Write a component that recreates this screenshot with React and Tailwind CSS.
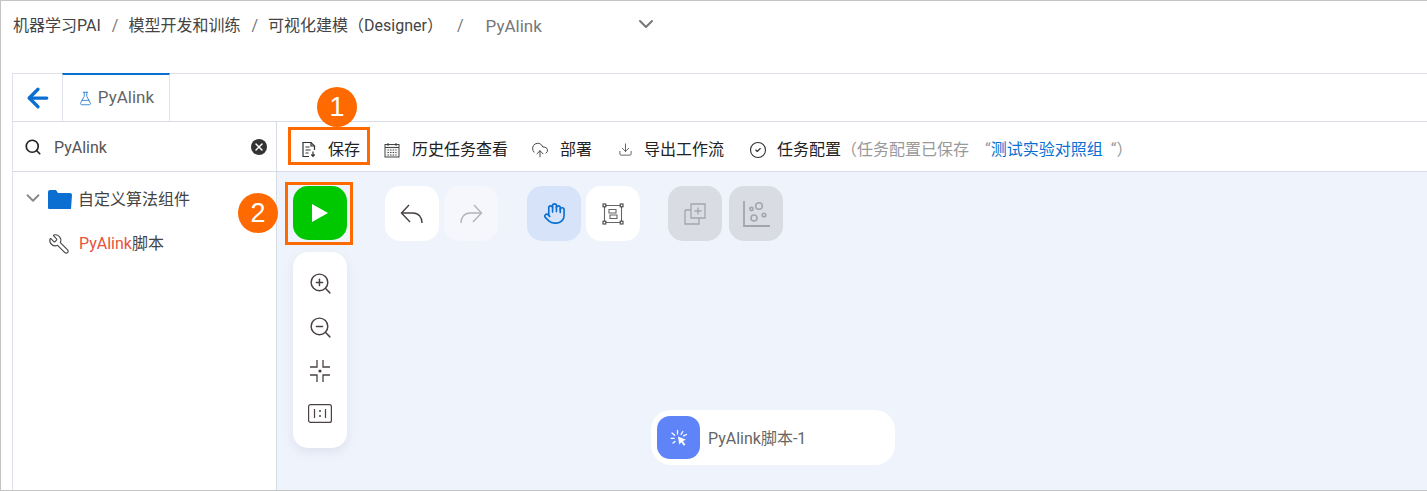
import { ChevronDown, ArrowLeft, FlaskConical, Search, CircleCheck, CloudUpload, Download, Hand, ZoomIn, ZoomOut, Wrench, X } from 'lucide-react';

const FONT = "font-['Roboto','Noto_Sans_CJK_SC',sans-serif]";

function SaveIcon() {
  return (
    <svg width="16" height="17" viewBox="0 0 16 17" fill="none" stroke="#333" strokeWidth="1.2">
      <path d="M8 15.5H2V1.5h8l3.5 3.5v4" />
      <path d="M10 1.5V5h3.5M4.5 6h4M4.5 9h5M4.5 12h3" />
      <path d="M12 10.5v4.5M10.3 13.5l1.7 1.8 1.7-1.8" />
    </svg>
  );
}

function CalendarIcon() {
  return (
    <svg width="16" height="16" viewBox="0 0 16 16" fill="none" stroke="#444" strokeWidth="1">
      <rect x="1" y="2.5" width="14" height="12.5" fill="#f5f5f5" />
      <path d="M1 5.5h14M4 1v3M12 1v3" />
      <path d="M3.5 8h9M3.5 10.5h9M3.5 13h9" strokeDasharray="1.4 1.2" />
    </svg>
  );
}

function ReplyIcon({ color, flip }) {
  return (
    <svg width="24" height="20" viewBox="0 0 24 20" fill="none" stroke={color} strokeWidth="1.4" className={flip ? '-scale-x-100' : ''}>
      <path d="M9 1L1.5 9l8.5 9" />
      <path d="M1.5 9H13c5.500 0 9 4 9 10" />
    </svg>
  );
}

function SelectIcon() {
  return (
    <svg width="22" height="22" viewBox="0 0 22 22" fill="none" stroke="#666" strokeWidth="1.1">
      <path d="M2.500 2.500h17v17h-17z" />
      <path d="M7 6.500h7v3.500H7zM8 12h7v3.500H8z" />
      <g fill="#fff" stroke="#444">
        <rect x="1" y="1" width="2.800" height="2.800" />
        <rect x="18.200" y="1" width="2.800" height="2.800" />
        <rect x="1" y="18.200" width="2.800" height="2.800" />
        <rect x="18.200" y="18.200" width="2.800" height="2.800" />
      </g>
    </svg>
  );
}

function GroupIcon() {
  return (
    <svg width="22" height="22" viewBox="0 0 22 22" fill="none" stroke="#a3a5aa" strokeWidth="1.3">
      <path d="M7 1h14v14H7z" />
      <path d="M1 7h6M1 7v14h14v-6" />
      <path d="M14 4.500v7M10.500 8h7" />
    </svg>
  );
}

function ScatterIcon() {
  return (
    <svg width="28" height="28" viewBox="0 0 28 28" fill="none" stroke="#a3a5aa" strokeWidth="1.6">
      <path d="M2 1v25h26" strokeWidth="1.8" />
      <circle cx="17" cy="6" r="3.300" />
      <circle cx="9.500" cy="9" r="1.600" />
      <circle cx="12" cy="18" r="3" />
      <circle cx="22" cy="15" r="1.800" />
    </svg>
  );
}

function FitIcon() {
  return (
    <svg width="24" height="24" viewBox="0 0 24 24" fill="none" stroke="#4a4042" strokeWidth="1.3">
      <path d="M9 1v7H2M15 1v7h7M9 23v-7H2M15 23v-7h7" />
      <circle cx="12" cy="12" r="1.600" fill="#4a4042" stroke="none" />
    </svg>
  );
}

function RatioIcon() {
  return (
    <svg width="24" height="19" viewBox="0 0 24 19" fill="none" stroke="#4a4042" strokeWidth="1.2">
      <rect x="0.600" y="0.600" width="22.800" height="17.800" rx="2" />
      <path d="M6.500 5v9M17.500 5v9" />
      <circle cx="12" cy="7" r="1" fill="#4a4042" stroke="none" />
      <circle cx="12" cy="12" r="1" fill="#4a4042" stroke="none" />
    </svg>
  );
}

function ClickIcon() {
  return (
    <svg width="18" height="18" viewBox="0 0 18 18" fill="#fff" stroke="#fff">
      <path d="M8 7.500l8 3.200-3.200 1.300 2.600 3.600-1.600 1.100-2.400-3.500-2.200 2.400z" stroke="none" />
      <path d="M7.500 1.500v3.500M2 4l2.700 2.300M1 9.300h3.200M3 14l2-1.600M12.800 2.500l-1.700 2.800M16.500 5.500l-3 1.400" strokeWidth="1.300" strokeLinecap="round" fill="none" />
    </svg>
  );
}

function FolderIcon() {
  return (
    <svg width="24" height="20" viewBox="0 0 24 20">
      <path d="M0 2a2 2 0 0 1 2-2h6l2 3h12a2 2 0 0 1 2 2l-1 14H1a1 1 0 0 1-1-1z" fill="#0a6fd0" />
    </svg>
  );
}

function Tool({ icon, label, className = '' }) {
  return (
    <div className={`flex items-center text-[16px] text-[#222] whitespace-nowrap ${className}`}>
      {icon}
      <span>{label}</span>
    </div>
  );
}

function CanvasBtn({ children, className = 'bg-white' }) {
  return <div className={`w-[54px] h-[55px] rounded-[15px] flex items-center justify-center ${className}`}>{children}</div>;
}

function Marker({ n, className }) {
  return (
    <div className={`absolute w-10 h-10 rounded-full bg-[#ff6a00] text-white text-[27px] flex items-center justify-center font-['Liberation_Sans',sans-serif] ${className}`}>{n}</div>
  );
}

export default function App() {
  return (
    <div className={`relative w-[1427px] h-[491px] overflow-hidden bg-white border-t border-l border-b border-[#c4c4c4] flex flex-col ${FONT}`}>
      <div className="h-[72px] pl-3 pt-[13px] flex items-start text-[16px] text-[#444] shrink-0">
        <span>机器学习PAI</span>
        <span className="ml-[11px] mr-[10px] text-[#777]">/</span>
        <span>模型开发和训练</span>
        <span className="ml-[11px] mr-[10px] text-[#777]">/</span>
        <span>可视化建模（Designer）</span>
        <span className="ml-[14px] mr-[22px] text-[#777]">/</span>
        <span className="text-[#777] text-[17px]">PyAlink</span>
        <ChevronDown className="ml-[92px] -mt-[2px] w-[24px] h-[24px] text-[#777]" strokeWidth={2} />
      </div>

      <div className="ml-[11px] flex-1 flex flex-col border-l border-t border-[#dfe2e8] min-h-0">
        <div className="h-[48px] flex border-b border-[#d8dce6] shrink-0">
          <div className="w-[49px] flex items-center justify-center">
            <ArrowLeft className="w-[30px] h-[30px] text-[#0a6fd0]" strokeWidth={2.6} />
          </div>
          <div className="w-[108px] -mt-px border-t-2 border-[#0a6fd0] border-l border-r border-l-[#dfe2e8] border-r-[#dfe2e8] flex items-center justify-center gap-[5px] text-[17px] text-[#666]">
            <FlaskConical className="w-[15px] h-[15px] text-[#2a7fd0]" strokeWidth={1.4} />
            <span>PyAlink</span>
          </div>
        </div>

        <div className="flex-1 flex min-h-0">
          <div className="w-[264px] shrink-0 border-r border-[#d8dce6]">
            <div className="h-[50px] flex items-center pl-[11px] pr-[9px] border-b border-[#d8dce6] text-[16px] text-[#555]">
              <Search className="w-[18px] h-[18px] text-[#222]" strokeWidth={2.2} />
              <span className="ml-[12px] flex-1 pt-[2px]">PyAlink</span>
              <div className="w-4 h-4 rounded-full bg-[#333] flex items-center justify-center">
                <X className="w-3 h-3 text-white" strokeWidth={3} />
              </div>
            </div>
            <div className="flex items-center h-[56px] pl-[9px] text-[16px] text-[#444]">
              <ChevronDown className="w-[22px] h-[22px] text-[#888] -mt-1" strokeWidth={2} />
              <div className="ml-[4px] mr-[6px]"><FolderIcon /></div>
              <span>自定义算法组件</span>
            </div>
            <div className="flex items-center pl-[35px] mt-[4px] text-[16px]">
              <Wrench className="w-[22px] h-[22px] text-[#444] -scale-x-100" strokeWidth={1.2} />
              <span className="ml-[9px] text-[#e5533d]">PyAlink<span className="text-[#444]">脚本</span></span>
            </div>
          </div>

          <div className="flex-1 flex flex-col min-w-0">
            <div className="h-[50px] shrink-0 flex items-center pl-[24px] pt-[6px] border-b border-[#d8dce6]">
              <Tool icon={<span className="mr-[11px]"><SaveIcon /></span>} label="保存" className="mr-[24px]" />
              <Tool icon={<span className="mr-[12px]"><CalendarIcon /></span>} label="历史任务查看" className="mr-[23px]" />
              <Tool icon={<CloudUpload className="mr-[11px] w-[18px] h-[18px] text-[#444]" strokeWidth={1.3} />} label="部署" className="mr-[26px]" />
              <Tool icon={<Download className="mr-[11px] w-[15px] h-[15px] text-[#444]" strokeWidth={1.3} />} label="导出工作流" className="mr-[25px]" />
              <Tool icon={<CircleCheck className="mr-[10px] w-[18px] h-[18px] text-[#333]" strokeWidth={1.5} />} label="任务配置" />
              <span className="text-[16px] text-[#999] whitespace-nowrap">（任务配置已保存<span className="ml-[16px]">“</span><span className="text-[#0a6fd0]">测试实验对照组</span><span className="ml-[8px]">“）</span></span>
            </div>

            <div className="relative flex-1 bg-[#eff3fb] flex items-start pt-[14px] pl-[16px]">
              <div className="flex flex-col items-center w-[54px]">
                <div className="w-[54px] h-[54px] rounded-[15px] bg-[#00c800] flex items-center justify-center">
                  <svg width="16" height="18" viewBox="0 0 16 18"><path d="M0 0l16 9-16 9z" fill="#fff" /></svg>
                </div>
                <div className="mt-[12px] w-[54px] h-[196px] rounded-[15px] bg-white shadow-[0_4px_10px_rgba(170,180,210,0.25)] flex flex-col items-center pt-[19px] gap-[20px]">
                  <ZoomIn className="w-[25px] h-[25px] text-[#4a4042]" strokeWidth={1.4} />
                  <ZoomOut className="w-[25px] h-[25px] -mt-px text-[#4a4042]" strokeWidth={1.4} />
                  <div className="-mt-px"><FitIcon /></div>
                  <div className="mt-px"><RatioIcon /></div>
                </div>
              </div>

              <div className="ml-[38px] flex gap-[5px]">
                <CanvasBtn><ReplyIcon color="#4a4042" /></CanvasBtn>
                <CanvasBtn className="bg-[#f5f7fc]"><ReplyIcon color="#b5b3b6" flip /></CanvasBtn>
              </div>
              <div className="ml-[29px] flex gap-[5px]">
                <CanvasBtn className="bg-[#d6e3f9]"><Hand className="w-[23px] h-[23px] text-[#0a6fd0]" strokeWidth={1.7} /></CanvasBtn>
                <CanvasBtn><SelectIcon /></CanvasBtn>
              </div>
              <div className="ml-[28px] flex gap-[7px]">
                <CanvasBtn className="bg-[#d9dce2]"><GroupIcon /></CanvasBtn>
                <CanvasBtn className="bg-[#d9dce2]"><ScatterIcon /></CanvasBtn>
              </div>

              <div className="absolute left-[374px] top-[238px] w-[244px] h-[55px] rounded-[20px] bg-white flex items-center pl-[6px]">
                <div className="w-[43px] h-[43px] rounded-[13px] bg-[#5f84f8] flex items-center justify-center"><ClickIcon /></div>
                <span className="ml-[8px] pt-[2px] text-[16px] text-[#666]">PyAlink脚本-1</span>
              </div>
            </div>
          </div>
        </div>
      </div>

      <div className="absolute left-[287px] top-[126px] w-[82px] h-[38px] border-[3px] border-[#ff6a00]" />
      <div className="absolute left-[284px] top-[181px] w-[68px] h-[63px] border-[3px] border-[#ff6a00]" />
      <Marker n="1" className="left-[316px] top-[86px]" />
      <Marker n="2" className="left-[237px] top-[192px]" />
    </div>
  );
}
